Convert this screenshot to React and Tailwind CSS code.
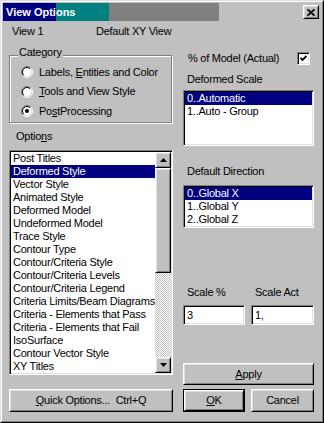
import React from 'react';

// Win98 bevel styles
const raised =
  'border border-t-white border-l-white border-b-black border-r-black shadow-[inset_1px_1px_0_#dfdfdf,inset_-1px_-1px_0_#808080] bg-[#c0c0c0]';
const sunken =
  'border border-t-[#808080] border-l-[#808080] border-b-white border-r-white shadow-[inset_1px_1px_0_#000,inset_-1px_-1px_0_#dfdfdf] bg-white';

const optionItems = [
  'Post Titles',
  'Deformed Style',
  'Vector Style',
  'Animated Style',
  'Deformed Model',
  'Undeformed Model',
  'Trace Style',
  'Contour Type',
  'Contour/Criteria Style',
  'Contour/Criteria Levels',
  'Contour/Criteria Legend',
  'Criteria Limits/Beam Diagrams',
  'Criteria - Elements that Pass',
  'Criteria - Elements that Fail',
  'IsoSurface',
  'Contour Vector Style',
  'XY Titles',
];

function Radio({ checked }) {
  return (
    <svg width="12" height="12" viewBox="0 0 12 12" className="shrink-0">
      <circle cx="6" cy="6" r="4.5" fill="#fff" />
      <path d="M2.1 9.9 A5.5 5.5 0 0 1 9.9 2.1" stroke="#808080" fill="none" />
      <path d="M9.9 2.1 A5.5 5.5 0 0 1 2.1 9.9" stroke="#fff" fill="none" />
      <path d="M2.8 9.2 A4.5 4.5 0 0 1 9.2 2.8" stroke="#000" fill="none" />
      <path d="M9.2 2.8 A4.5 4.5 0 0 1 2.8 9.2" stroke="#dfdfdf" fill="none" />
      {checked && <circle cx="6" cy="6" r="2" fill="#000" />}
    </svg>
  );
}

function ListItem({ text, selected }) {
  return (
    <div
      className={`h-[13px] pl-[2px] whitespace-nowrap ${selected ? 'bg-[#000080] text-white' : ''}`}
    >
      {text}
    </div>
  );
}

function Arrow({ down }) {
  return (
    <svg width="7" height="4" viewBox="0 0 7 4">
      <polygon points={down ? '0,0 7,0 3.5,4' : '3.5,0 7,4 0,4'} fill="#000" />
    </svg>
  );
}

export default function App() {
  return (
    <div className="w-[324px] h-[423px] border border-t-[#dfdfdf] border-l-[#dfdfdf] border-b-black border-r-black font-['Liberation_Sans',Arial,sans-serif] text-[11px] leading-[13px] tracking-[-0.25px] text-black">
      <div className="h-full border border-t-white border-l-white border-b-[#808080] border-r-[#808080] bg-[#c0c0c0] p-px">
        {/* title bar */}
        <div className="h-[18px] flex items-center">
          <div className="w-[216px] h-full flex items-center pl-[3px] bg-[image:linear-gradient(90deg,#000080_53px,#008080_53px,#008080_106px,#808080_106px)] text-white font-bold tracking-normal">
            View Options
          </div>
          <div className={`${raised} ml-auto mr-[2px] w-[16px] h-[14px] flex items-center justify-center`}>
            <svg width="8" height="7" viewBox="0 0 8 7">
              <path d="M0.5 0.3 L7.5 6.7 M7.5 0.3 L0.5 6.7" stroke="#000" strokeWidth="1.7" />
            </svg>
          </div>
        </div>

        {/* view row */}
        <div className="mt-[4px] flex pl-[9px]">
          <span className="w-[84px]">View 1</span>
          <span>Default XY View</span>
        </div>

        <div className="flex gap-[10px] pl-[6px]">
          {/* left column */}
          <div className="w-[164px] flex flex-col">
            <div className="relative mt-[17px] h-[68px] w-[163px] border border-[#808080] shadow-[inset_1px_1px_0_#fff,1px_1px_0_#fff] pt-[6px] pl-[11px]">
              <span className="absolute top-[-10px] left-[8px] px-px bg-[#c0c0c0]">Category</span>
              <div className="h-[20px] flex items-center gap-[6px]">
                <Radio />
                <span>
                  Labels, <span className="underline">E</span>ntities and Color
                </span>
              </div>
              <div className="h-[19px] flex items-center gap-[6px]">
                <Radio />
                <span>
                  <span className="underline">T</span>ools and View Style
                </span>
              </div>
              <div className="h-[20px] flex items-center gap-[6px]">
                <Radio checked />
                <span>
                  Po<span className="underline">s</span>tProcessing
                </span>
              </div>
            </div>

            <div className="mt-[7px] pl-[7px]">
              Optio<span className="underline">n</span>s
            </div>

            <div className={`${sunken} mt-[7px] h-[225px] p-px flex`}>
              <div className="flex-1 min-w-0 overflow-hidden">
                {optionItems.map((t) => (
                  <ListItem key={t} text={t} selected={t === 'Deformed Style'} />
                ))}
              </div>
              <div className="w-[16px] flex flex-col bg-[image:repeating-conic-gradient(#c0c0c0_0%_25%,#fff_0%_50%)] bg-[length:2px_2px]">
                <div className={`${raised} h-[16px] flex items-center justify-center`}>
                  <Arrow />
                </div>
                <div className={`${raised} h-[105px]`} />
                <div className="flex-1" />
                <div className={`${raised} h-[16px] flex items-center justify-center`}>
                  <Arrow down />
                </div>
              </div>
            </div>

            <div className={`${raised} mt-[14px] h-[23px] flex items-center justify-center whitespace-pre`}>
              <span className="underline">Q</span>uick Options...  Ctrl+Q
            </div>
          </div>

          {/* right column */}
          <div className="w-[131px] flex flex-col">
            <div className="mt-[14px] h-[13px] flex items-center pl-[5px]">
              <span>% of Model (Actual)</span>
              <div className={`${sunken} ml-auto mr-[4px] w-[13px] h-[13px] p-px flex items-center justify-center`}>
                <svg width="7" height="7" viewBox="0 0 7 7">
                  <path d="M0.5 3 L2.5 5 L6.5 1" stroke="#000" strokeWidth="1.8" fill="none" />
                </svg>
              </div>
            </div>

            <div className="mt-[8px] pl-[4px]">Deformed Scale</div>
            <div className={`${sunken} mt-[4px] h-[56px] p-px`}>
              <ListItem text="0..Automatic" selected />
              <ListItem text="1..Auto - Group" />
            </div>

            <div className="mt-[19px] pl-[4px]">Default Direction</div>
            <div className={`${sunken} mt-[7px] h-[43px] p-px`}>
              <ListItem text="0..Global X" selected />
              <ListItem text="1..Global Y" />
              <ListItem text="2..Global Z" />
            </div>

            <div className="mt-[58px] grid grid-cols-[62px_63px] gap-x-[6px]">
              <span className="pl-[4px]">Scale %</span>
              <span className="pl-[4px]">Scale Act</span>
            </div>
            <div className="mt-[6px] grid grid-cols-[62px_63px] gap-x-[6px]">
              <div className={`${sunken} h-[20px] p-px pl-[3px] flex items-center`}>3</div>
              <div className={`${sunken} h-[20px] p-px pl-[3px] flex items-center`}>1,</div>
            </div>

            <div className={`${raised} mt-[38px] h-[22px] flex items-center justify-center`}>
              <span>
                <span className="underline">A</span>pply
              </span>
            </div>

            <div className="mt-[4px] grid grid-cols-[62px_63px] gap-x-[6px]">
              <div className="h-[23px] border border-black">
                <div className={`${raised} h-full flex items-center justify-center`}>
                  <span>
                    <span className="underline">O</span>K
                  </span>
                </div>
              </div>
              <div className={`${raised} h-[23px] flex items-center justify-center`}>Cancel</div>
            </div>
          </div>
        </div>
      </div>
    </div>
  );
}
